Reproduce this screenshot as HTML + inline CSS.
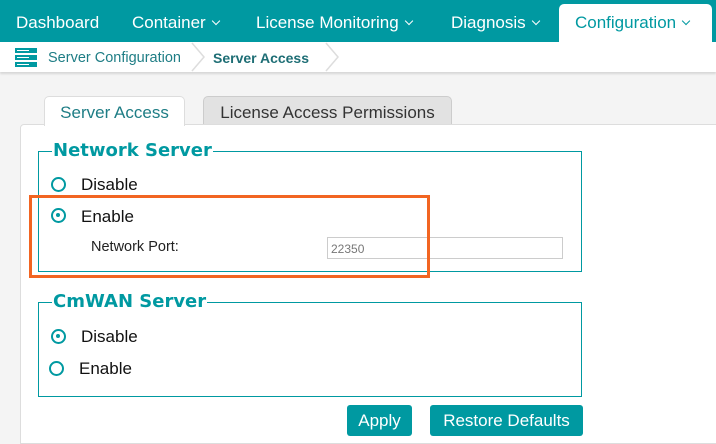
<!DOCTYPE html>
<html><head><style>
*{margin:0;padding:0;box-sizing:border-box}
body{width:716px;height:440px;overflow:hidden;background:#f4f4f4;font-family:"Liberation Sans",sans-serif;position:relative}
.a{position:absolute;white-space:nowrap}
.nav{left:0;top:0;width:716px;height:42px;background:#0099a1}
.ni{color:#fff;font-size:17px;top:13px}
.ch{display:inline-block;width:6px;height:6px;border-right:1.5px solid currentColor;border-bottom:1.5px solid currentColor;transform:rotate(45deg);margin-left:7px;position:relative;top:-4px}
.rad{width:15px;height:15px;border:2.5px solid #0099a1;border-radius:50%;background:#fff}
.rad.on::after{content:"";position:absolute;left:3px;top:3px;width:4px;height:4px;background:#0099a1;border-radius:50%}
.lbl{font-size:17px;color:#111}
.fs{border:1px solid #0099a1;background:#fff}
.lg{font-family:"DejaVu Sans",sans-serif;font-size:18px;font-weight:bold;color:#0099a1;background:#fff;padding:0 1px}
.btn{background:#0099a1;color:#fff;font-size:17px;border-radius:3px;text-align:center;line-height:31px;height:31px}
</style></head><body>
<div class="a nav"></div>
<div class="a ni" style="left:16px">Dashboard</div>
<div class="a ni" style="left:132px">Container<span class="ch"></span></div>
<div class="a ni" style="left:256px">License Monitoring<span class="ch"></span></div>
<div class="a ni" style="left:451px">Diagnosis<span class="ch"></span></div>
<div class="a" style="left:559px;top:4px;width:153px;height:38px;background:#fff;border-radius:5px 5px 0 0"></div>
<div class="a ni" style="left:575px;color:#0099a1">Configuration<span class="ch"></span></div>
<div class="a" style="left:0;top:42px;width:716px;height:30px;background:#fff;box-shadow:0 2px 2px rgba(0,0,0,.12)"></div>
<svg class="a" style="left:15px;top:48px" width="22" height="19" viewBox="0 0 22 19"><g fill="#0099a1"><rect x="0" y="0" width="22" height="5"/><rect x="0" y="7" width="22" height="5"/><rect x="0" y="14" width="22" height="5"/></g><g fill="#fff"><rect x="2" y="2" width="12" height="1"/><rect x="2" y="9" width="12" height="1"/><rect x="2" y="16" width="12" height="1"/></g></svg>
<div class="a" style="left:48px;top:50px;font-size:14.5px;color:#1e7d85">Server Configuration</div>
<svg class="a" style="left:190px;top:42px" width="160" height="30"><polyline points="2,1 14,15 2,29" fill="none" stroke="#ddd" stroke-width="1.5"/><polyline points="136,1 148,15 136,29" fill="none" stroke="#ddd" stroke-width="1.5"/></svg>
<div class="a" style="left:213px;top:50px;font-size:14px;font-weight:bold;color:#1e6e75">Server Access</div>
<div class="a" style="left:20px;top:124px;width:700px;height:320px;background:#fff;border:1px solid #ddd;border-radius:4px 0 0 0"></div>
<div class="a" style="left:44px;top:96px;width:141px;height:30px;background:#fff;border:1px solid #ddd;border-bottom:none;border-radius:5px 5px 0 0;font-size:17px;color:#1e7d85;text-align:center;line-height:31px">Server Access</div>
<div class="a" style="left:203px;top:96px;width:249px;height:28px;background:#e2e2e2;border:1px solid #ccc;border-bottom:none;border-radius:5px 5px 0 0;font-size:17px;color:#333;text-align:center;line-height:31px">License Access Permissions</div>

<div class="a fs" style="left:38px;top:151px;width:544px;height:121px"></div>
<div class="a lg" style="left:52px;top:140px">Network Server</div>
<div class="a rad" style="left:51px;top:177px"></div>
<div class="a lbl" style="left:81px;top:175px">Disable</div>
<div class="a rad on" style="left:51px;top:208px"></div>
<div class="a lbl" style="left:81px;top:207px">Enable</div>
<div class="a" style="left:91px;top:239px;font-size:14.5px;color:#222">Network Port:</div>
<div class="a" style="left:327px;top:237px;width:236px;height:22px;border:1px solid #ccc;font-size:12px;color:#777;padding:4px 3px">22350</div>
<div class="a" style="left:29px;top:195px;width:401px;height:83px;border:3px solid #f26522"></div>

<div class="a fs" style="left:38px;top:302px;width:544px;height:95px"></div>
<div class="a lg" style="left:52px;top:291px">CmWAN Server</div>
<div class="a rad on" style="left:51px;top:329px"></div>
<div class="a lbl" style="left:81px;top:327px">Disable</div>
<div class="a rad" style="left:49px;top:361px"></div>
<div class="a lbl" style="left:79px;top:359px">Enable</div>

<div class="a btn" style="left:347px;top:405px;width:65px">Apply</div>
<div class="a btn" style="left:430px;top:405px;width:153px">Restore Defaults</div>
</body></html>
